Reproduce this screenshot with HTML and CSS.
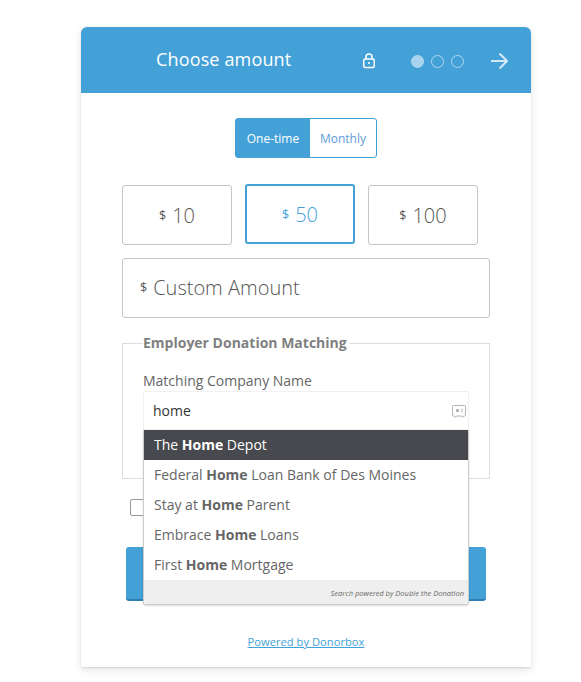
FILE: index.html
```html
<!DOCTYPE html>
<html>
<head>
    <title>Donation Form</title>
    <link rel="stylesheet" href="styles.css">
</head>
<body>
    <div class="card">
        <div class="card-header">
            <h1>Choose amount</h1>
            <svg class="lock-icon" width="14" height="16" viewBox="0 0 14 16" fill="none" stroke="#ffffff" stroke-width="1.5">
                <rect x="1.75" y="6" width="10.5" height="8.5" rx="1.5"/>
                <path d="M4 6V4a3 3 0 0 1 6 0v2"/>
                <rect x="6" y="9.2" width="2" height="1.6" fill="#ffffff" stroke="none"/>
            </svg>
            <div class="steps">
                <span class="step step-active"></span>
                <span class="step"></span>
                <span class="step"></span>
            </div>
            <svg class="next-icon" width="17" height="18" viewBox="0 0 17 18" fill="none" stroke="#d5e8f5" stroke-width="2">
                <path d="M0 9H15.500"/>
                <path d="M8.500 1.500L16 9L8.500 16.500"/>
            </svg>
        </div>
        <div class="card-body">
            <div class="toggle">
                <span class="toggle-item toggle-active">One-time</span>
                <span class="toggle-item">Monthly</span>
            </div>
            <div class="amounts">
                <div class="amount"><span class="currency">$</span> 10</div>
                <div class="amount amount-selected"><span class="currency">$</span> 50</div>
                <div class="amount"><span class="currency">$</span> 100</div>
            </div>
            <div class="custom-amount"><span class="currency">$</span> Custom Amount</div>
            <fieldset class="matching">
                <legend>Employer Donation Matching</legend>
                <label>Matching Company Name</label>
                <div class="search">
                    <div class="search-input">
                        <span>home</span>
                        <svg class="search-icon" width="14" height="13" viewBox="0 0 14 13" fill="none" stroke="#b5b5b5">
                            <path d="M1.5 0.5H12.5a1 1 0 0 1 1 1V10a1 1 0 0 1-1 1H11.5L10.5 12.5L9.5 11H4.5L3.5 12.5L2.5 11H1.5a1 1 0 0 1-1-1V1.500a1 1 0 0 1 1-1z"/>
                            <rect x="4" y="4" width="3" height="3" fill="#b5b5b5" stroke="none"/>
                            <path d="M10 3.500V7.500"/>
                        </svg>
                    </div>
                    <div class="results">
                        <div class="result result-active">The <b>Home</b> Depot</div>
                        <div class="result">Federal <b>Home</b> Loan Bank of Des Moines</div>
                        <div class="result">Stay at <b>Home</b> Parent</div>
                        <div class="result">Embrace <b>Home</b> Loans</div>
                        <div class="result">First <b>Home</b> Mortgage</div>
                        <div class="results-footer">Search powered by Double the Donation</div>
                    </div>
                </div>
            </fieldset>
            <div class="check-row"><span class="checkbox"></span></div>
            <div class="next-button"></div>
            <div class="powered"><a href="#">Powered by Donorbox</a></div>
        </div>
    </div>
</body>
</html>
```

FILE: styles.css
```css
body {
    box-sizing: border-box;
    height: 682px;
    margin: 0;
    padding: 27px 0 0 81px;
    background-color: #ffffff;
    font-family: "Open Sans", sans-serif;
    color: #666666;
}

.card {
    width: 450px;
    height: 640px;
    box-shadow: 0 1px 2px rgba(0, 0, 0, 0.1), 0 3px 10px rgba(0, 0, 0, 0.1);
    border-radius: 6px 6px 0 0;
}

.card-header {
    display: flex;
    align-items: center;
    height: 66px;
    background-color: #43a1d8;
    border-radius: 6px 6px 0 0;
    color: #ffffff;
}

.card-header h1 {
    width: 210px;
    margin: -2px 0 0 75px;
    font-size: 18px;
    font-weight: 400;
    letter-spacing: 0.15px;
    white-space: nowrap;
}

.lock-icon {
    margin: 2px 0 0 -4px;
}

.steps {
    display: flex;
    gap: 7px;
    margin: 2px 0 0 35px;
}

.step {
    box-sizing: border-box;
    width: 13px;
    height: 13px;
    border: 1px solid #b5d9f0;
    border-radius: 50%;
}

.step-active {
    background-color: #a8d2ed;
}

.next-icon {
    margin: 2px 0 0 27px;
}

.card-body {
    height: 574px;
    box-sizing: border-box;
    padding: 25px 41px 0;
    background-color: #ffffff;
}

.toggle {
    display: flex;
    width: 142px;
    height: 40px;
    margin: 0 auto 27px;
    box-sizing: border-box;
    border: 1px solid #43a1d8;
    border-radius: 3px;
    font-size: 12px;
}

.toggle-item {
    display: flex;
    align-items: center;
    justify-content: center;
    flex: 1;
    color: #5d9cd6;
}

.toggle-active {
    flex: 0 0 74px;
    background-color: #43a1d8;
    color: #ffffff;
}

.amounts {
    display: flex;
    gap: 13px;
    margin-bottom: 13px;
}

.amount {
    display: flex;
    align-items: center;
    justify-content: center;
    gap: 6px;
    box-sizing: border-box;
    width: 110px;
    height: 60px;
    border: 1px solid #c4c4c4;
    border-radius: 3px;
    font-size: 20px;
    font-weight: 300;
    color: #555555;
}

.amount-selected {
    margin-top: -1px;
    border: 2px solid #43a1d8;
    color: #43a1d8;
}

.currency {
    font-size: 12.5px;
    font-weight: 400;
}

.custom-amount {
    display: flex;
    align-items: center;
    gap: 6px;
    box-sizing: border-box;
    width: 368px;
    height: 60px;
    padding: 0 0 2px 17px;
    border: 1px solid #c4c4c4;
    border-radius: 3px;
    font-size: 20px;
    font-weight: 300;
    color: #555555;
}

.matching {
    box-sizing: border-box;
    width: 368px;
    height: 146px;
    margin: 15px 0 0;
    padding: 17px 20px 0;
    border: 1px solid #dddddd;
}

.matching legend {
    margin-left: 0;
    padding: 0 2px 2px 0;
    font-size: 14px;
    font-weight: 700;
    color: #808080;
}

.matching label {
    display: block;
    font-size: 14px;
    line-height: 20px;
}

.search {
    position: relative;
}

.search-input {
    display: flex;
    align-items: center;
    justify-content: space-between;
    box-sizing: border-box;
    width: 326px;
    height: 39px;
    padding: 0 2px 0 9px;
    border: 1px solid #f0f0f0;
    font-size: 14px;
    color: #333333;
}

.search-icon {
    margin-top: 2px;
}

.results {
    position: absolute;
    top: 39px;
    left: 0;
    width: 326px;
    box-sizing: border-box;
    border: 1px solid #cccccc;
    border-top: none;
    background-color: #ffffff;
    border-radius: 0 0 3px 3px;
    font-size: 14px;
    box-shadow: 0 1px 2px rgba(0, 0, 0, 0.15);
}

.result {
    height: 30px;
    padding-left: 10px;
    line-height: 30px;
    white-space: nowrap;
}

.result-active {
    background-color: #48494e;
    color: #ffffff;
}

.results-footer {
    height: 24px;
    padding-right: 4px;
    background-color: #efefef;
    color: #6b6b6b;
    font-size: 7.5px;
    font-style: italic;
    line-height: 27px;
    text-align: right;
}

.check-row {
    height: 17px;
    margin: 20px 0 0 8px;
}

.checkbox {
    display: block;
    box-sizing: border-box;
    width: 17px;
    height: 17px;
    border: 1px solid #999999;
    border-radius: 2px;
}

.next-button {
    box-sizing: border-box;
    width: 360px;
    height: 54px;
    margin: 31px 0 0 4px;
    background-color: #43a1d8;
    border-bottom: 2px solid #2f7fb5;
    border-radius: 3px;
}

.powered {
    margin-top: 33px;
    font-size: 11.2px;
    text-align: center;
}

.powered a {
    color: #43a1d8;
}
```
